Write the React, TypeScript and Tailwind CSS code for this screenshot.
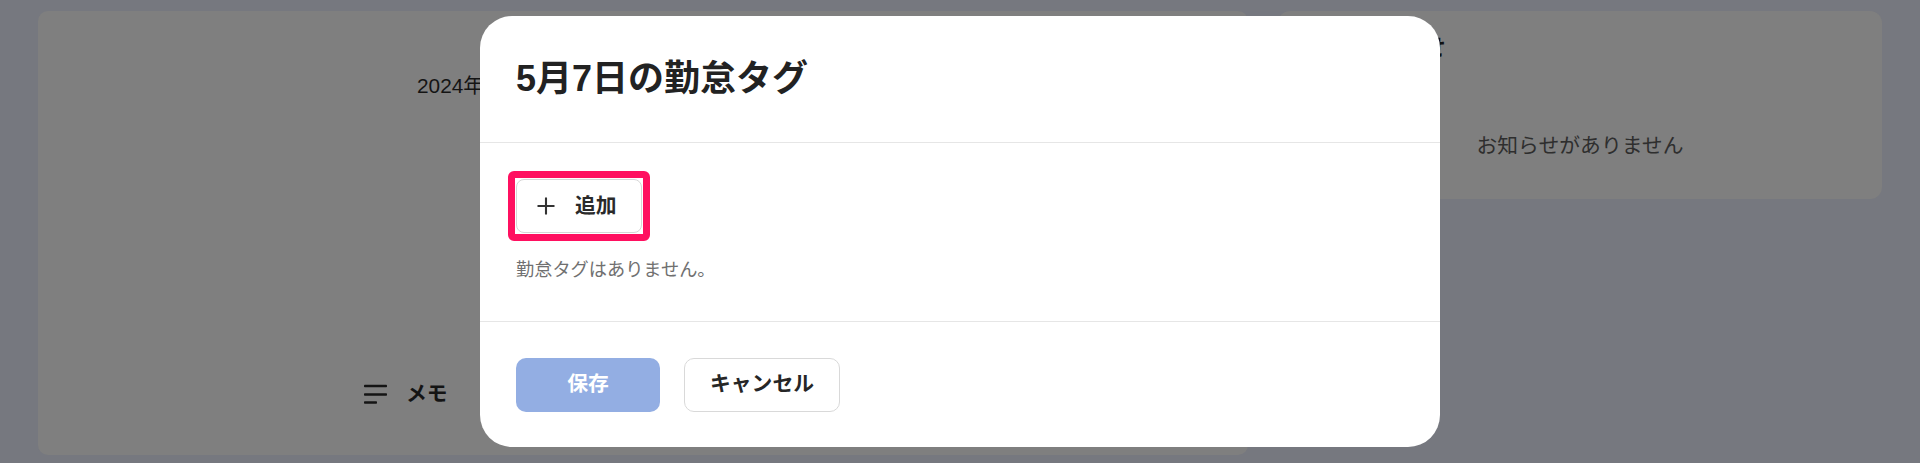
import React from "react";

const FONT = '"Liberation Sans", "Noto Sans CJK JP", sans-serif';

function NotesIcon() {
  return (
    <svg width="24" height="20" viewBox="0 0 24 20" className="shrink-0">
      <rect x="0" y="0.8" width="23" height="2.4" rx="0.8" fill="#141414" />
      <rect x="0" y="9.3" width="23" height="2.4" rx="0.8" fill="#141414" />
      <rect x="0" y="17.3" width="13" height="2.4" rx="0.8" fill="#141414" />
    </svg>
  );
}

function PlusIcon() {
  return (
    <svg width="18" height="18" viewBox="0 0 18 18" className="shrink-0">
      <path d="M9 0.5V17.5M0.5 9H17.5" stroke="#333333" strokeWidth="2.1" fill="none" />
    </svg>
  );
}

function BellIcon() {
  return (
    <svg width="24" height="24" viewBox="0 0 24 24" fill="none" stroke="#101010" strokeWidth="2" className="shrink-0">
      <path d="M6 8a6 6 0 0 1 12 0c0 7 3 9 3 9H3s3-2 3-9" />
      <path d="M10.3 21a1.94 1.94 0 0 0 3.4 0" />
    </svg>
  );
}

export default function App() {
  return (
    <div
      className="relative w-[1920px] h-[463px] overflow-hidden bg-[#76787f]"
      style={{ fontFamily: FONT }}
    >
      {/* Background page (dimmed) */}
      <div className="flex gap-[30px] px-[38px] pt-[11px] pb-[8px] h-full">
        <div className="w-[1210px] h-[444px] rounded-[10px] bg-[#7f7f7f] flex flex-col">
          <div className="pl-[379px] pt-[59px] text-[20.8px] leading-[31px] text-[#141414] whitespace-nowrap">
            2024年5月7日(火)
          </div>
          <div className="mt-auto pb-[46px] pl-[326px] flex items-center gap-[18px] h-[31px] box-content">
            <NotesIcon />
            <span className="text-[20.8px] leading-[31px] font-bold text-[#141414]">メモ</span>
          </div>
        </div>
        <div className="flex-1 h-[188px] rounded-[12px] bg-[#7f7f7f] flex flex-col">
          <div className="flex items-center gap-[20px] pl-[36px] pt-[21px] h-[31px] box-content">
            <BellIcon />
            <span className="text-[22px] leading-[31px] font-bold text-[#101010] whitespace-nowrap">お知らせ</span>
          </div>
          <div className="flex justify-center pt-[67px]">
            <span className="text-[20.8px] leading-[31px] text-[#2e2e2e]">お知らせがありません</span>
          </div>
        </div>
      </div>

      {/* Modal */}
      <div className="absolute inset-0 flex items-center justify-center">
        <div className="w-[960px] h-[431px] rounded-[32px] bg-white flex flex-col overflow-hidden">
          <div className="h-[127px] shrink-0 flex items-center px-[36px] border-b border-[#e6e6e6]">
            <h2 className="text-[36px] leading-none font-bold text-[#222222] whitespace-nowrap">
              5月7日の勤怠タグ
            </h2>
          </div>
          <div className="h-[179px] shrink-0 p-[36px] flex flex-col items-start gap-[24px] border-b border-[#e6e6e6] box-border">
            <div className="relative">
              <div className="absolute -inset-[8px] rounded-[6px] border-[7px] border-[#ff1060] pointer-events-none" />
              <button className="h-[54px] w-[126px] flex items-center gap-[20px] pl-[20px] pr-[24px] rounded-[8px] border border-[#d6d6d6] bg-white">
                <PlusIcon />
                <span className="text-[20.8px] leading-none font-bold text-[#2a2a2a] whitespace-nowrap">追加</span>
              </button>
            </div>
            <p className="text-[18.2px] leading-[27px] text-[#707070] whitespace-nowrap">
              勤怠タグはありません。
            </p>
          </div>
          <div className="flex-1 flex items-center gap-[24px] px-[36px]">
            <button className="w-[144px] h-[54px] rounded-[10px] bg-[#93aee3] text-white text-[20.8px] font-bold leading-none">
              保存
            </button>
            <button className="h-[54px] px-[25px] rounded-[10px] border border-[#d9d9d9] bg-white text-[#262626] text-[20.8px] font-bold leading-none whitespace-nowrap">
              キャンセル
            </button>
          </div>
        </div>
      </div>
    </div>
  );
}
